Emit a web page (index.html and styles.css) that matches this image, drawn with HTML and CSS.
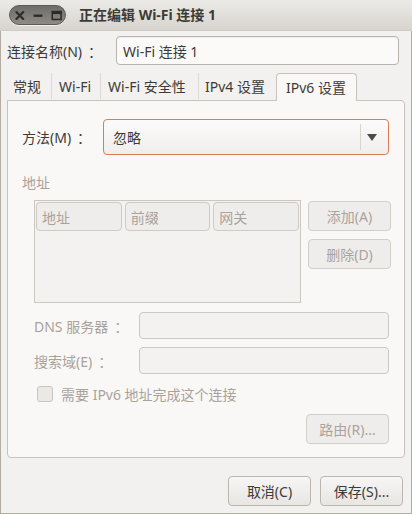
FILE: index.html
```html
<!DOCTYPE html>
<html lang="zh-CN">
<head>
<meta charset="utf-8">
<title>正在编辑 Wi-Fi 连接 1</title>
<link rel="stylesheet" href="styles.css">
</head>
<body>
<div class="window">
  <div class="titlebar">
    <div class="pill">
      <svg class="ic" width="56" height="19" viewBox="0 0 56 19">
        <path d="M6.5 6 L13.5 13 M13.5 6 L6.5 13" stroke="#2b2b2b" stroke-width="2.2" stroke-linecap="round"/>
        <rect x="24" y="8.5" width="9" height="2.4" fill="#2b2b2b"/>
        <rect x="43" y="5.5" width="9" height="8" fill="none" stroke="#2b2b2b" stroke-width="1.6"/>
        <rect x="43" y="5.5" width="9" height="2.5" fill="#2b2b2b"/>
      </svg>
    </div>
    <div class="title">正在编辑 Wi-Fi 连接 1</div>
  </div>

  <div class="content">
    <div class="name-row">
      <span class="name-label">连接名称(N)<span class="colon">：</span></span>
      <div class="entry name-entry">Wi-Fi 连接 1</div>
    </div>

    <div class="tabs">
      <div class="tab t1">常规</div>
      <div class="tab t2">Wi-Fi</div>
      <div class="tab t3">Wi-Fi 安全性</div>
      <div class="tab t4">IPv4 设置</div>
      <div class="tab active">IPv6 设置</div>
    </div>

    <div class="page">
      <div class="method-row">
        <span class="method-label">方法(M)<span class="colon">：</span></span>
        <div class="combo">
          <span class="combo-text">忽略</span>
          <span class="combo-sep"></span>
          <svg class="combo-arrow" width="10" height="7" viewBox="0 0 10 7"><path d="M0 0 H10 L5 7 Z" fill="#4a4a4a"/></svg>
        </div>
      </div>

      <div class="section-label">地址</div>

      <div class="addr">
        <div class="table">
          <div class="thead">
            <div class="th">地址</div>
            <div class="th">前缀</div>
            <div class="th">网关</div>
          </div>
        </div>
        <div class="addr-buttons">
          <div class="btn disabled">添加(A)</div>
          <div class="btn disabled">删除(D)</div>
        </div>
      </div>

      <div class="field-row first">
        <span class="field-label">DNS 服务器<span class="colon">：</span></span>
        <div class="entry disabled-entry"></div>
      </div>
      <div class="field-row">
        <span class="field-label">搜索域(E)<span class="colon">：</span></span>
        <div class="entry disabled-entry"></div>
      </div>

      <div class="check-row">
        <span class="checkbox"></span>
        <span class="check-label">需要 IPv6 地址完成这个连接</span>
      </div>

      <div class="route-row">
        <div class="btn disabled route">路由(R)...</div>
      </div>
    </div>

    <div class="actions">
      <div class="btn">取消(C)</div>
      <div class="btn">保存(S)...</div>
    </div>
  </div>
</div>
</body>
</html>
```

FILE: styles.css
```css
* { box-sizing: border-box; }

html, body {
  margin: 0;
  padding: 0;
}

body {
  width: 412px;
  height: 514px;
  overflow: hidden;
  font-family: "Noto Sans", "Noto Sans CJK SC", sans-serif;
  font-size: 14px;
  color: #3c3b37;
  background: #f2f1f0;
}

.colon {
  padding-left: 6px;
}

.window {
  width: 412px;
  height: 514px;
  border: 1px solid #b3aca3;
  border-top: none;
  background: #f2f1f0;
  display: flex;
  flex-direction: column;
}

.titlebar {
  height: 31px;
  flex: none;
  display: flex;
  align-items: center;
  background: linear-gradient(#eceae6, #d7d4cf);
  border-bottom: 1px solid #cfcbc5;
  padding-left: 9px;
  margin: 0 -1px;
}

.pill {
  width: 57px;
  height: 20px;
  border-radius: 10px;
  background: linear-gradient(#6f6d69, #8d8b87);
  border: 1px solid #5d5b58;
  box-shadow: 0 1px 0 rgba(255,255,255,0.6);
  display: flex;
  align-items: center;
}

.ic { display: block; }

.title {
  margin-left: 13px;
  font-weight: bold;
  font-size: 14px;
  color: #3c3b37;
  line-height: 18px;
}

.content {
  flex: 1;
  padding: 5px 7px 0 6px;
  display: flex;
  flex-direction: column;
}

.name-row {
  display: flex;
  align-items: center;
  height: 29px;
}

.name-label {
  width: 109px;
  flex: none;
}

.entry {
  border: 1px solid #bab4ac;
  border-radius: 4px;
  background: #fbfaf9;
  display: flex;
  align-items: center;
}

.name-entry {
  width: 283px;
  height: 29px;
  padding-left: 6px;
  box-shadow: inset 0 1px 1px rgba(0,0,0,0.05);
}

.tabs {
  display: flex;
  align-items: flex-end;
  height: 35px;
  position: relative;
  z-index: 1;
}

.tab {
  height: 26px;
  display: flex;
  align-items: center;
  border-right: 1px solid #dcd8d2;
  color: #3c3b37;
  margin-bottom: 1px;
}
.t1 { width: 45px; padding-left: 6px; }
.t2 { width: 49px; padding-left: 7px; }
.t3 { width: 98px; padding-left: 7px; }
.t4 { width: 77px; padding-left: 6px; border-right: none; }

.tab.active {
  width: 81px;
  height: 28px;
  padding-left: 9px;
  margin-bottom: -1px;
  border: 1px solid #c9c3bb;
  border-bottom: none;
  border-radius: 4px 4px 0 0;
  background: #f9f8f7;
  padding-bottom: 1px;
}

.page {
  width: 398px;
  height: 358px;
  border: 1px solid #c9c3bb;
  border-radius: 0 4px 4px 4px;
  background: #f9f8f7;
  padding: 18px 15px 0 14px;
  display: flex;
  flex-direction: column;
}

.method-row {
  display: flex;
  align-items: center;
  height: 36px;
}

.method-label {
  width: 81px;
  flex: none;
}

.combo {
  flex: 1;
  height: 36px;
  border: 1px solid #dc7c55;
  border-radius: 4px;
  background: linear-gradient(#fcfbfb, #f0eeec);
  display: flex;
  align-items: center;
  padding-left: 9px;
}

.combo-text { flex: 1; }

.combo-sep {
  width: 1px;
  height: 26px;
  background: #d8d4ce;
  margin-right: 6px;
}

.combo-arrow {
  margin-right: 11px;
  display: block;
}

.section-label {
  margin-top: 19px;
  height: 18px;
  line-height: 18px;
  color: #a9a29a;
}

.addr {
  display: flex;
  margin-top: 8px;
  margin-left: 12px;
}

.table {
  width: 267px;
  height: 103px;
  border: 1px solid #ccc7c0;
  background: #f3f2f0;
  padding: 1px;
}

.thead {
  display: flex;
  gap: 3px;
}

.th {
  width: 86px;
  height: 29px;
  border: 1px solid #cfcac4;
  border-radius: 4px;
  background: #efedeb;
  color: #aaa39b;
  display: flex;
  align-items: center;
  padding-left: 5px;
}

.addr-buttons {
  margin-left: 7px;
  display: flex;
  flex-direction: column;
  gap: 8px;
  padding-top: 1px;
}

.btn {
  width: 83px;
  height: 30px;
  border: 1px solid #bcb6ae;
  border-radius: 4px;
  background: linear-gradient(#f7f6f5, #e8e6e3);
  display: flex;
  align-items: center;
  justify-content: center;
  color: #3c3b37;
}

.btn.disabled {
  border-color: #d3cec8;
  background: #efedeb;
  color: #aaa39b;
}

.field-row {
  display: flex;
  align-items: center;
  height: 27px;
  margin-top: 8px;
  padding-left: 12px;
}
.field-row.first { margin-top: 9px; }

.field-label {
  width: 105px;
  flex: none;
  color: #a9a29a;
}

.disabled-entry {
  flex: 1;
  height: 27px;
  background: #f3f2f0;
  border-color: #cdc8c1;
}

.check-row {
  display: flex;
  align-items: center;
  margin-top: 11px;
  height: 18px;
  padding-left: 15px;
}

.checkbox {
  width: 16px;
  height: 16px;
  border: 1px solid #cbc5be;
  border-radius: 3px;
  background: #ebe9e6;
  margin-right: 8px;
}

.check-label { color: #a9a29a; }

.route-row {
  display: flex;
  justify-content: flex-end;
  margin-top: 11px;
}

.actions {
  display: flex;
  justify-content: flex-end;
  gap: 9px;
  margin-top: 18px;
  padding-right: 1px;
}

.actions .btn { width: 83px; }
```
